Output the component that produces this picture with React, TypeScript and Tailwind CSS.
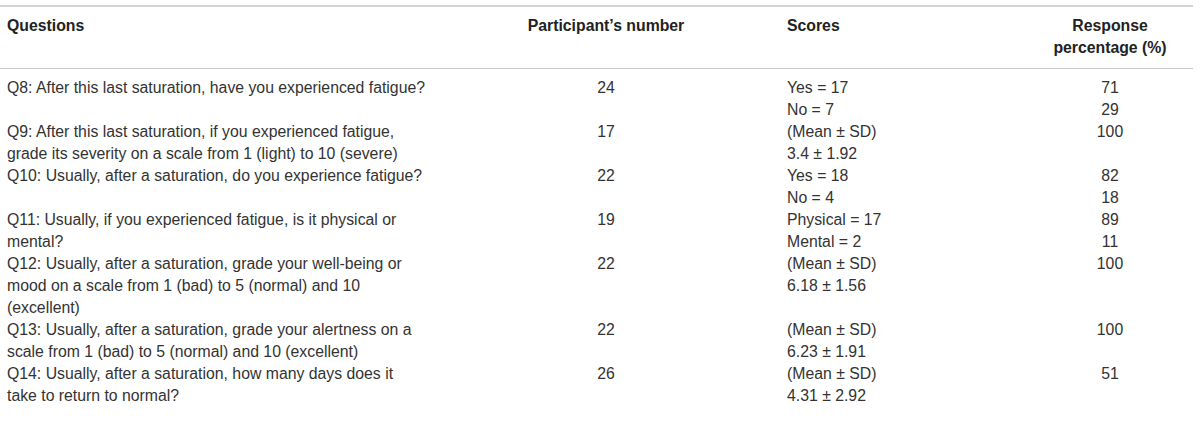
import React from "react";

type Row = { q: string; n: string; s: string[]; p: string[]; narrow?: boolean };

const rows: Row[] = [
  { q: "Q8: After this last saturation, have you experienced fatigue?", n: "24", s: ["Yes = 17", "No = 7"], p: ["71", "29"] },
  { q: "Q9: After this last saturation, if you experienced fatigue, grade its severity on a scale from 1 (light) to 10 (severe)", n: "17", s: ["(Mean ± SD)", "3.4 ± 1.92"], p: ["100"] },
  { q: "Q10: Usually, after a saturation, do you experience fatigue?", n: "22", s: ["Yes = 18", "No = 4"], p: ["82", "18"] },
  { q: "Q11: Usually, if you experienced fatigue, is it physical or mental?", n: "19", s: ["Physical = 17", "Mental = 2"], p: ["89", "11"] },
  { q: "Q12: Usually, after a saturation, grade your well-being or mood on a scale from 1 (bad) to 5 (normal) and 10 (excellent)", n: "22", s: ["(Mean ± SD)", "6.18 ± 1.56"], p: ["100"] },
  { q: "Q13: Usually, after a saturation, grade your alertness on a scale from 1 (bad) to 5 (normal) and 10 (excellent)", n: "22", s: ["(Mean ± SD)", "6.23 ± 1.91"], p: ["100"] },
  { q: "Q14: Usually, after a saturation, how many days does it take to return to normal?", n: "26", s: ["(Mean ± SD)", "4.31 ± 2.92"], p: ["51"], narrow: true },
];

export default function App() {
  return (
    <div
      className="w-[1200px] h-[438px] bg-white pt-[5px] overflow-hidden text-[15.8px] leading-[22px] text-[#333]"
      style={{ fontFamily: '"Liberation Sans", Arial, sans-serif' }}
    >
      <div className="w-[1193px] border-t-2 border-[#d4d4d4]">
        <div className="grid grid-cols-[506px_200px_321px_166px] border-b border-[#c8c8c8] pt-[8px] pb-[9px] font-bold text-[#222]">
          <div className="pl-[7px]">Questions</div>
          <div className="text-center">Participant’s number</div>
          <div className="pl-[81px]">Scores</div>
          <div className="text-center">
            Response
            <br />
            percentage (%)
          </div>
        </div>
        <div className="pt-[8px]">
          {rows.map((r) => (
            <div key={r.q} className="grid grid-cols-[506px_200px_321px_166px]">
              <div className="pl-[7px]">
                <div className={r.narrow ? "w-[410px]" : "w-[425px]"}>{r.q}</div>
              </div>
              <div className="text-center">{r.n}</div>
              <div className="pl-[81px]">
                {r.s.map((x) => (
                  <div key={x}>{x}</div>
                ))}
              </div>
              <div className="text-center">
                {r.p.map((x, i) => (
                  <div key={i}>{x}</div>
                ))}
              </div>
            </div>
          ))}
        </div>
      </div>
    </div>
  );
}
